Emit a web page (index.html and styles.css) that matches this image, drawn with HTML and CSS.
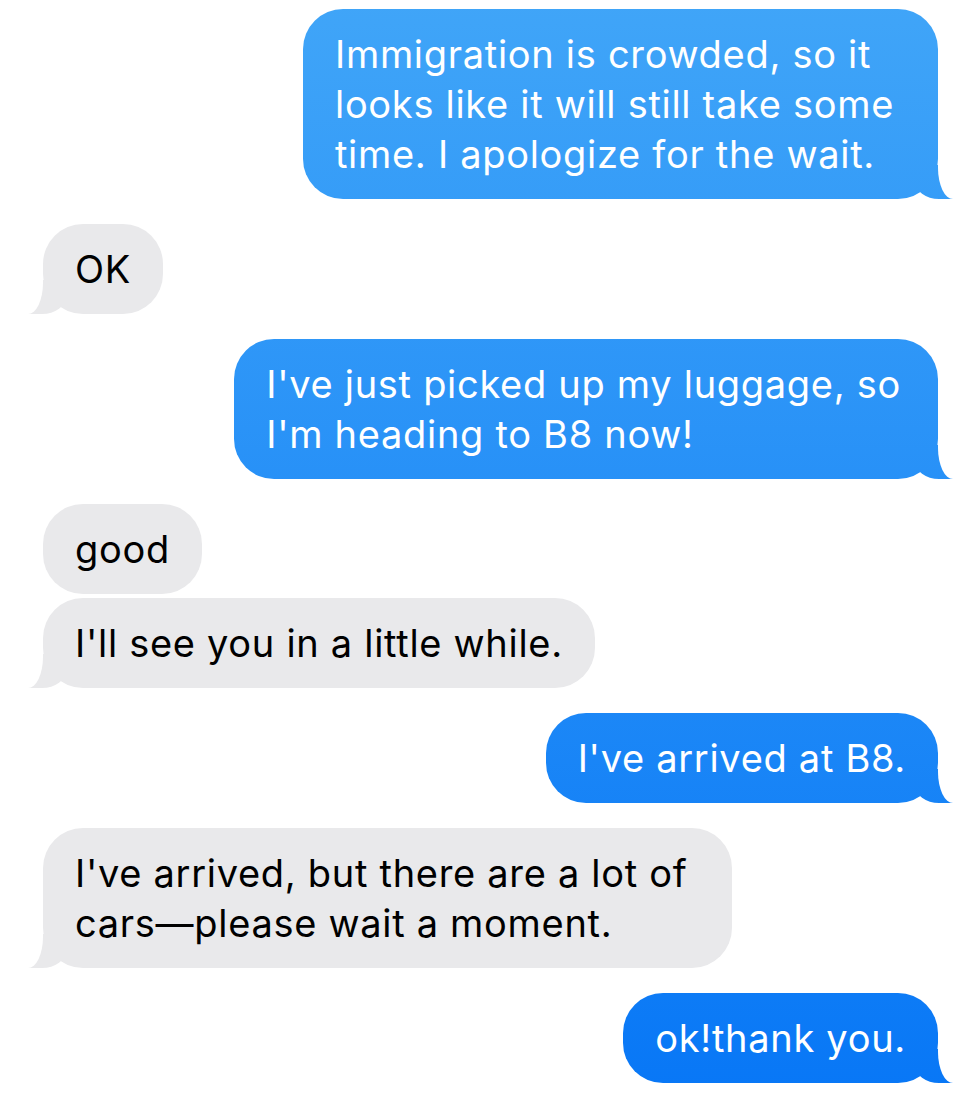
FILE: index.html
```html
<!DOCTYPE html>
<html lang="en">
<head>
<meta charset="utf-8">
<title>Messages</title>
<link rel="stylesheet" href="styles.css">
</head>
<body>
<div class="thread">
  <div class="msg sent multi tail first">Immigration is crowded, so it<br>looks like it will still take some<br>time. I apologize for the wait.</div>
  <div class="msg recv tail gap">OK</div>
  <div class="msg sent multi2 tail gap">I've just picked up my luggage, so<br>I'm heading to B8 now!</div>
  <div class="msg recv gap">good</div>
  <div class="msg recv tail tight">I'll see you in a little while.</div>
  <div class="msg sent tail gap">I've arrived at B8.</div>
  <div class="msg recv multi tail gap">I've arrived, but there are a lot of<br>cars—please wait a moment.</div>
  <div class="msg sent tail gap">ok!thank you.</div>
</div>
</body>
</html>
```
FILE: styles.css
```css
html, body {
  margin: 0;
  background: #ffffff;
}
body {
  font-family: Inter, "Noto Sans", sans-serif;
}
.thread {
  display: flex;
  flex-direction: column;
  padding: 9px 42px 0 43px;
}
.msg {
  position: relative;
  padding: 20px 32px;
  border-radius: 40px;
  font-size: 38px;
  line-height: 50px;
  white-space: nowrap;
  letter-spacing: 0.7px;
}
.msg.multi { padding-right: 44px; }
.msg.multi2 { padding-right: 37px; }
.gap { margin-top: 25px; }
.tight { margin-top: 4px; }
.sent {
  align-self: flex-end;
  color: #ffffff;
  background: linear-gradient(180deg, #40a5f8 0%, #0877f6 100%) fixed;
}
.recv {
  align-self: flex-start;
  color: #000000;
  background: #e9e9eb;
}
.tail::before,
.tail::after {
  content: "";
  position: absolute;
  bottom: 0;
}
.sent.tail::before {
  right: -15px;
  width: 38px;
  height: 34px;
  background: inherit;
  border-bottom-left-radius: 24px 18px;
}
.sent.tail::after {
  right: -40px;
  width: 40px;
  height: 36px;
  background: #ffffff;
  border-bottom-left-radius: 15px 31px;
}
.recv.tail::before {
  left: -15px;
  width: 38px;
  height: 34px;
  background: #e9e9eb;
  border-bottom-right-radius: 24px 18px;
}
.recv.tail::after {
  left: -40px;
  width: 40px;
  height: 36px;
  background: #ffffff;
  border-bottom-right-radius: 15px 31px;
}
```
